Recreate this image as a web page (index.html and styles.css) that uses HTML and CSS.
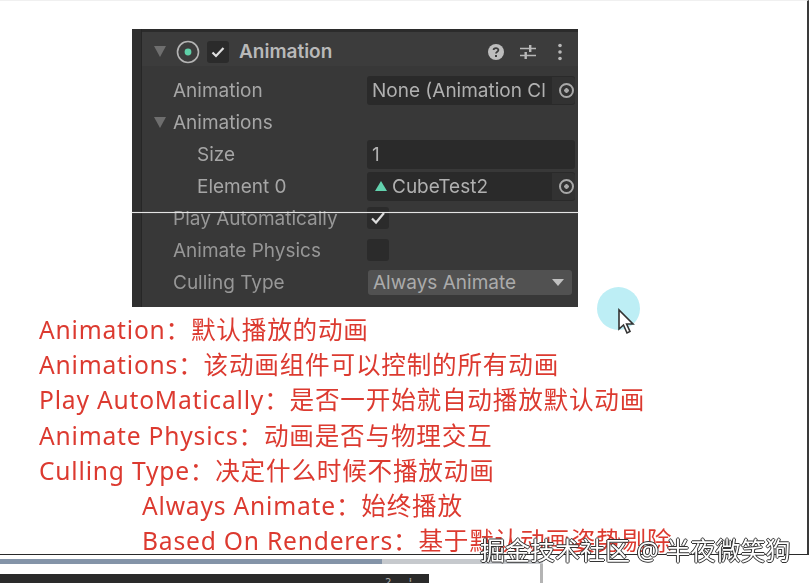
FILE: index.html
```html
<!DOCTYPE html>
<html>
<head>
    <title>Animation</title>
    <link rel="stylesheet" href="styles.css">
</head>
<body>
    <div class="slide">
        <!-- 检视面板 -->
        <div class="inspector">
            <div class="inspector-gutter"></div>
            <div class="inspector-main">
                <div class="component-header">
                    <span class="fold-arrow"></span>
                    <svg class="component-icon" width="24" height="24" viewBox="0 0 24 24">
                        <circle cx="12" cy="12" r="10.5" fill="none" stroke="#b4b4b4" stroke-width="1.6"/>
                        <circle cx="12" cy="12" r="3.4" fill="#5fd0a8"/>
                    </svg>
                    <span class="checkbox header-check">
                        <svg width="14" height="12" viewBox="0 0 14 12"><path d="M1.5 6.5 L5 10 L12.5 2" fill="none" stroke="#e0e0e0" stroke-width="2.2"/></svg>
                    </span>
                    <span class="component-name">Animation</span>
                    <span class="header-tools">
                        <svg width="18" height="18" viewBox="0 0 18 18">
                            <circle cx="9" cy="9" r="8" fill="#bdbdbd"/>
                            <path d="M6.6 7 C6.6 4.6 11.4 4.6 11.4 7 C11.4 8.8 9 8.6 9 10.6" fill="none" stroke="#3c3c3c" stroke-width="1.8"/>
                            <rect x="8" y="12" width="2" height="2" fill="#3c3c3c"/>
                        </svg>
                        <svg width="18" height="18" viewBox="0 0 18 18">
                            <path d="M1 5.5 H17 M1 12.5 H17" stroke="#b8b8b8" stroke-width="1.6"/>
                            <rect x="10" y="2" width="2.4" height="7" fill="#b8b8b8"/>
                            <rect x="5.5" y="9" width="2.4" height="7" fill="#b8b8b8"/>
                        </svg>
                        <svg class="more-icon" width="6" height="18" viewBox="0 0 6 18">
                            <circle cx="3" cy="2.5" r="1.8" fill="#b8b8b8"/>
                            <circle cx="3" cy="9" r="1.8" fill="#b8b8b8"/>
                            <circle cx="3" cy="15.5" r="1.8" fill="#b8b8b8"/>
                        </svg>
                    </span>
                </div>
                <div class="prop-list">
                    <div class="prop-row">
                        <span class="prop-label">Animation</span>
                        <span class="field object-field">
                            <span class="field-text">None (Animation Cl</span>
                            <span class="picker"><span class="picker-dot"></span></span>
                        </span>
                    </div>
                    <div class="prop-row">
                        <span class="prop-label"><span class="fold-arrow small"></span>Animations</span>
                    </div>
                    <div class="prop-row">
                        <span class="prop-label indent">Size</span>
                        <span class="field"><span class="field-text">1</span></span>
                    </div>
                    <div class="prop-row">
                        <span class="prop-label indent">Element 0</span>
                        <span class="field object-field">
                            <span class="field-text"><span class="clip-icon"></span>CubeTest2</span>
                            <span class="picker"><span class="picker-dot"></span></span>
                        </span>
                    </div>
                    <div class="prop-row dim">
                        <span class="prop-label">Play Automatically</span>
                        <span class="checkbox">
                            <svg width="16" height="14" viewBox="0 0 16 14"><path d="M2 7.5 L6 11.5 L14 2" fill="none" stroke="#dcdcdc" stroke-width="2.2"/></svg>
                        </span>
                    </div>
                    <div class="prop-row dim">
                        <span class="prop-label">Animate Physics</span>
                        <span class="checkbox"></span>
                    </div>
                    <div class="prop-row dim">
                        <span class="prop-label">Culling Type</span>
                        <span class="dropdown">Always Animate<span class="dropdown-arrow"></span></span>
                    </div>
                </div>
            </div>
            <div class="scan-line"></div>
        </div>

        <!-- 说明文字 -->
        <div class="notes">
            <div class="note">Animation：默认播放的动画</div>
            <div class="note">Animations：该动画组件可以控制的所有动画</div>
            <div class="note">Play AutoMatically：是否一开始就自动播放默认动画</div>
            <div class="note">Animate Physics：动画是否与物理交互</div>
            <div class="note">Culling Type：决定什么时候不播放动画</div>
            <div class="note sub">Always Animate：始终播放</div>
            <div class="note sub">Based On Renderers：基于默认动画姿势剔除</div>
        </div>

        <!-- 鼠标高亮 -->
        <div class="cursor-halo"></div>
        <svg class="cursor" width="20" height="28" viewBox="0 0 20 28">
            <path d="M2 2 L2 21 L6.5 17 L10 25 L13 23.5 L9.6 16 L16 16 Z" fill="#fff" stroke="#333" stroke-width="1.6"/>
        </svg>
    </div>

    <div class="next-window">
        <div class="next-progress"></div>
        <div class="next-frame">
            <div class="next-toolbar"><span>?</span><span>⁞</span></div>
        </div>
    </div>

    <div class="watermark">掘金技术社区 @ 半夜微笑狗</div>
</body>
</html>
```

FILE: styles.css
```css
html, body {
    margin: 0;
    height: 583px;
    overflow: hidden;
    background-color: #fff;
}
body {
    position: relative;
    font-family: "Noto Sans", "Noto Sans CJK SC", sans-serif;
}
.slide {
    position: relative;
    width: 809px;
    height: 555px;
    box-sizing: border-box;
    padding-top: 28px;
    border-top: 1px solid #f0f0f0;
    border-right: 2px solid #3a3a3a;
    border-bottom: 1px solid #2a2a2a;
}

/* inspector */
.inspector {
    position: relative;
    display: flex;
    width: 446px;
    height: 278px;
    margin-left: 132px;
    background-color: #383838;
    color: #a6a6a6;
    font-family: Inter, "Liberation Sans", sans-serif;
    font-size: 19px;
}
.inspector-gutter {
    width: 9px;
    background-color: #2f2f2f;
    border-right: 1px solid #262626;
    flex-shrink: 0;
}
.inspector-main {
    flex: 1;
    min-width: 0;
    filter: blur(0.6px);
}
.component-header {
    display: flex;
    align-items: center;
    height: 37px;
    padding: 5px 15px 0 12px;
    box-sizing: border-box;
    border-top: 3px solid #2b2b2b;
    background-color: #3c3c3c;
}
.fold-arrow {
    width: 0;
    height: 0;
    border-left: 6px solid transparent;
    border-right: 6px solid transparent;
    border-top: 11px solid #6e6e6e;
    margin-right: 10px;
}
.fold-arrow.small {
    position: absolute;
    left: -19px;
    top: 7px;
    margin: 0;
}
.component-icon {
    margin-right: 7px;
}
.checkbox {
    display: flex;
    align-items: center;
    justify-content: center;
    width: 22px;
    height: 22px;
    border-radius: 3px;
    background-color: #2b2b2b;
}
.header-check {
    margin-right: 10px;
}
.component-name {
    color: #b9b9b9;
    font-weight: 600;
}
.header-tools {
    display: flex;
    align-items: center;
    gap: 14px;
    margin-left: auto;
}
.more-icon {
    margin-left: 6px;
}
.prop-list {
    padding-top: 8px;
}
.prop-row {
    display: flex;
    align-items: center;
    height: 32px;
}
.prop-row.dim {
    color: #979797;
}
.prop-label {
    position: relative;
    width: 194px;
    margin-left: 31px;
    padding-top: 1px;
    flex-shrink: 0;
    white-space: nowrap;
}
.prop-label.indent {
    width: 170px;
    margin-left: 55px;
}
.field {
    display: flex;
    align-items: center;
    width: 208px;
    height: 29px;
    border-radius: 3px;
    background-color: #2a2a2a;
    box-sizing: border-box;
    padding-left: 5px;
    white-space: nowrap;
    color: #b0b0b0;
}
.object-field {
    justify-content: space-between;
}
.field-text {
    display: flex;
    align-items: center;
}
.clip-icon {
    width: 0;
    height: 0;
    border-left: 6px solid transparent;
    border-right: 6px solid transparent;
    border-bottom: 10px solid #62d2ae;
    margin: 0 5px 0 3px;
}
.picker {
    display: flex;
    align-items: center;
    justify-content: flex-end;
    width: 23px;
    height: 27px;
    padding-right: 1px;
    box-sizing: border-box;
    background-color: #323232;
    border-radius: 0 3px 3px 0;
}
.picker-dot {
    width: 11px;
    height: 11px;
    border: 2px solid #a8a8a8;
    border-radius: 50%;
    box-sizing: content-box;
    background: radial-gradient(circle, #a8a8a8 0 2px, transparent 2.5px);
}
.dropdown {
    display: flex;
    align-items: center;
    justify-content: space-between;
    width: 204px;
    height: 25px;
    margin-left: 1px;
    padding: 0 8px 0 5px;
    box-sizing: border-box;
    border-radius: 3px;
    background-color: #515151;
    color: #ababab;
}
.dropdown-arrow {
    width: 0;
    height: 0;
    border-left: 6px solid transparent;
    border-right: 6px solid transparent;
    border-top: 7px solid #c0c0c0;
}
.scan-line {
    position: absolute;
    left: 0;
    right: 0;
    top: 183px;
    height: 1px;
    background-color: #e4e4e4;
    box-shadow: 0 0 1px #aaa;
}

/* notes */
.notes {
    padding: 5px 0 0 39px;
    color: #dc3a30;
    font-size: 24.6px;
    letter-spacing: 0.8px;
    line-height: 35.2px;
    white-space: nowrap;
    filter: blur(0.3px);
}
.note.sub {
    padding-left: 103px;
}

/* cursor */
.cursor-halo {
    position: absolute;
    left: 597px;
    top: 286px;
    width: 43px;
    height: 43px;
    border-radius: 50%;
    background-color: #bdeef5;
}
.cursor {
    position: absolute;
    left: 617px;
    top: 307px;
}

/* next slide */
.next-window {
    width: 543px;
    padding-top: 4px;
}
.next-progress {
    height: 5px;
    border-radius: 0 6px 0 0;
    background: linear-gradient(to right, #8494a8 382px, #c6c9cd 382px);
}
.next-frame {
    height: 19px;
    box-sizing: border-box;
    padding-top: 10px;
    border-right: 3px solid #b4b4b4;
    overflow: hidden;
}
.next-toolbar {
    display: flex;
    justify-content: flex-end;
    gap: 18px;
    width: 429px;
    height: 20px;
    padding: 2px 17px 0 0;
    box-sizing: border-box;
    background-color: #2a2a2a;
    font-size: 12px;
    line-height: 14px;
    color: #aaa;
}

.watermark {
    position: absolute;
    left: 480px;
    top: 534px;
    font-size: 25px;
    line-height: 32px;
    white-space: nowrap;
    color: #fff;
    text-shadow: -1px 0 #333, 1px 0 #333, 0 -1px #333, 0 1px #333;
}
```
